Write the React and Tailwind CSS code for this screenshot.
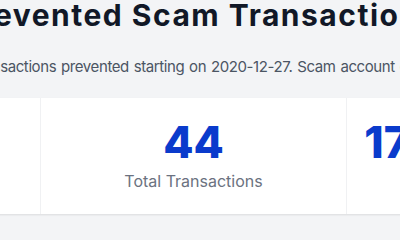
import React from 'react';

const stats = [
  { value: '12', label: 'Scam Accounts' },
  { value: '44', label: 'Total Transactions' },
  { value: '171,250,000', label: 'Total Amount Prevented' },
];

const StatCard = ({ value, label }) => (
  <div className="w-[306px] shrink-0 flex flex-col items-center pt-[22px] pb-[21px]">
    <div className="text-[44px] leading-[44px] font-extrabold text-[#0a3bcc] whitespace-nowrap">
      {value}
    </div>
    <div className="mt-[5px] text-[16px] leading-[24px] text-[#6b7280] whitespace-nowrap">
      {label}
    </div>
  </div>
);

const App = () => {
  return (
    <div className="w-[400px] h-[240px] overflow-hidden bg-[#f3f4f6] font-['Inter',sans-serif]">
      {/* Header */}
      <div className="-mt-[3px] w-[700px]">
        <h1 className="-ml-[40px] text-[30px] leading-[36px] font-bold tracking-[1.5px] text-[#111827] whitespace-nowrap">
          Prevented Scam Transactions
        </h1>
        <p className="-ml-[30px] mt-[22px] text-[15px] leading-[24px] tracking-[-0.4px] [word-spacing:1px] text-[#4b5563] whitespace-nowrap">
          Transactions prevented starting on 2020-12-27. Scam account data provided by partners.
        </p>
      </div>

      {/* Stats */}
      <div className="mt-[19px] -ml-[265px] w-[918px] flex bg-white divide-x divide-[#f0f1f3] shadow-[0_1px_2px_rgba(0,0,0,0.1)]">
        {stats.map((s) => (
          <StatCard key={s.label} value={s.value} label={s.label} />
        ))}
      </div>
    </div>
  );
};

export default App;
